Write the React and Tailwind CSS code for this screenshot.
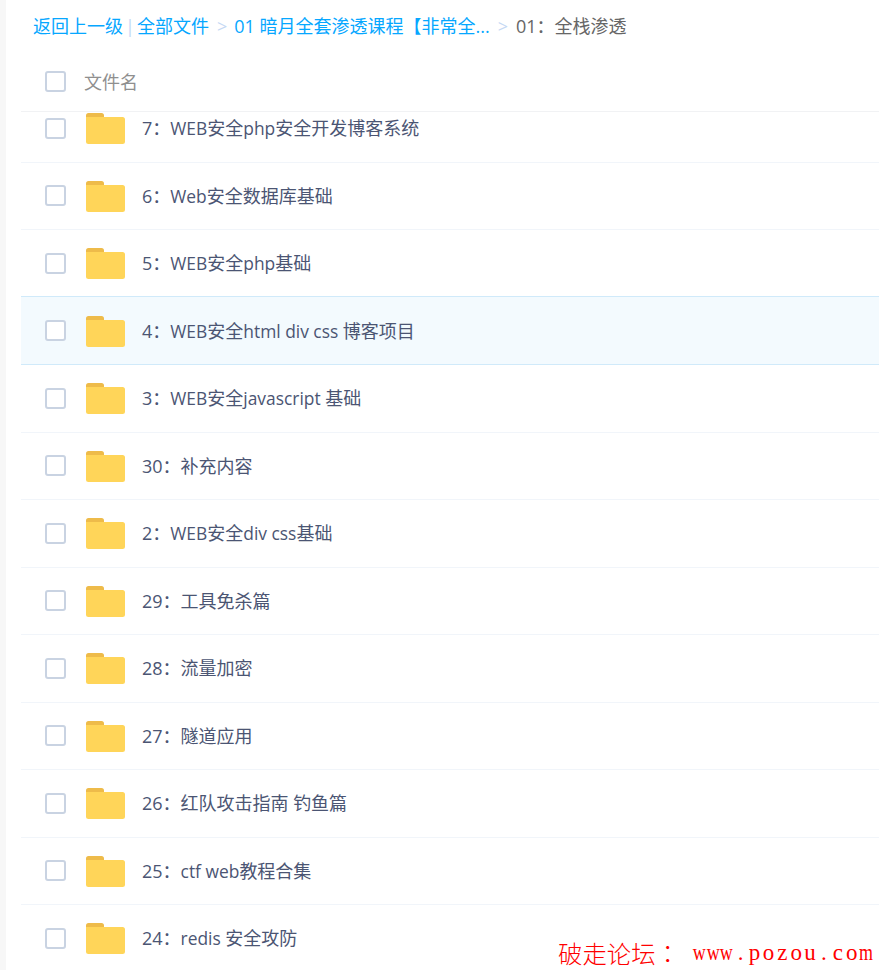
const names = [
  "7\uFF1AWEB安全php安全开发博客系统",
  "6\uFF1AWeb安全数据库基础",
  "5\uFF1AWEB安全php基础",
  "4\uFF1AWEB安全html div css 博客项目",
  "3\uFF1AWEB安全javascript 基础",
  "30\uFF1A补充内容",
  "2\uFF1AWEB安全div css基础",
  "29\uFF1A工具免杀篇",
  "28\uFF1A流量加密",
  "27\uFF1A隧道应用",
  "26\uFF1A红队攻击指南 钓鱼篇",
  "25\uFF1Actf web教程合集",
  "24\uFF1Aredis 安全攻防",
];

function Name({ text }) {
  return text.split(/([A-Za-z ]+)/).map((part, i) =>
    i % 2 ? <span key={i} className="text-[17.400px]">{part}</span> : part
  );
}

function Folder() {
  return (
    <svg width="39" height="31" viewBox="0 0 39 31" className="block shrink-0">
      <path d="M0 2.500A2.500 2.500 0 0 1 2.500 0h13A2.500 2.500 0 0 1 18 2.500V8H0Z" fill="#eebb4a" />
      <path d="M0 4h36.500A2.500 2.500 0 0 1 39 6.500V28.500A2.500 2.500 0 0 1 36.500 31H2.500A2.500 2.500 0 0 1 0 28.500Z" fill="#ffd559" />
    </svg>
  );
}

function Check() {
  return <span className="block w-[21px] h-[21px] shrink-0 rounded-[3px] border-2 border-[#c9d3e2] bg-white" />;
}

function Row({ name, active, beforeActive }) {
  return (
    <div
      className={
        "flex items-center pl-6 border-b " +
        (active
          ? "h-[68px] bg-[#f3fafe] border-[#d0eafa] shadow-[0_-1px_0_#d0eafa]"
          : beforeActive
            ? "h-[67px] border-[#f1f5fa]"
            : "h-[67.5px] border-[#f1f5fa]")
      }
    >
      <Check />
      <span className="ml-5 mt-px"><Folder /></span>
      <span className="ml-[17px] text-[18px] leading-6 text-[#4b5573] whitespace-pre"><Name text={name} /></span>
    </div>
  );
}

export default function App() {
  return (
    <div
      className="relative w-[879px] h-[970px] overflow-hidden bg-white flex"
      style={{ fontFamily: '"Open Sans", "Noto Sans CJK SC", sans-serif' }}
    >
      <div className="w-[6px] shrink-0 bg-[#f7f7f7]" />
      <div className="flex-1 min-w-0 pl-[15px]">
        <div className="h-[52px] pl-3 text-[18px] leading-6 flex items-center whitespace-pre">
          <span className="text-[#06a7ff]">返回上一级</span>
          <span className="text-[#c4d8f4] mx-[2px]">|</span>
          <span className="text-[#06a7ff]">全部文件</span>
          <span className="text-[#c4d8f4] ml-2 mr-[7px]">&gt;</span>
          <span className="text-[#06a7ff]">01 暗月全套渗透课程【非常全...</span>
          <span className="text-[#c4d8f4] ml-2 mr-2">&gt;</span>
          <span className="text-[#666666]">{"01\uFF1A全栈渗透"}</span>
        </div>
        <div className="h-[60px] flex items-center pl-6 border-b border-[#f1f2f4]">
          <Check />
          <span className="ml-[18px] text-[18px] leading-6 text-[#8f8f8f]">文件名</span>
        </div>
        <div className="h-[858px] overflow-hidden">
          <div className="-mt-[17px]">
            {names.map((n, i) => (
              <Row key={n} name={n} active={i === 3} beforeActive={i === 2} />
            ))}
          </div>
        </div>
      </div>
      <div className="absolute left-[558px] top-[937px] leading-8 text-[#ff0000] whitespace-pre flex">
        <span className="text-[24.400px] font-light w-[134px]">
          破走论坛
          <span style={{ fontFamily: '"Noto Sans CJK TC", sans-serif' }}>{"\uFF1A"}</span>
        </span>
        <span className="flex text-[23px]" style={{ fontFamily: '"Liberation Serif", serif' }}>
          {"www.pozou.com".split("").map((c, i) => (
            <span key={i} className="w-[13.900px] shrink-0 flex justify-center">
              <span className={c === "w" || c === "m" ? "inline-block scale-x-[0.78]" : "inline-block"}>{c}</span>
            </span>
          ))}
        </span>
      </div>
    </div>
  );
}
